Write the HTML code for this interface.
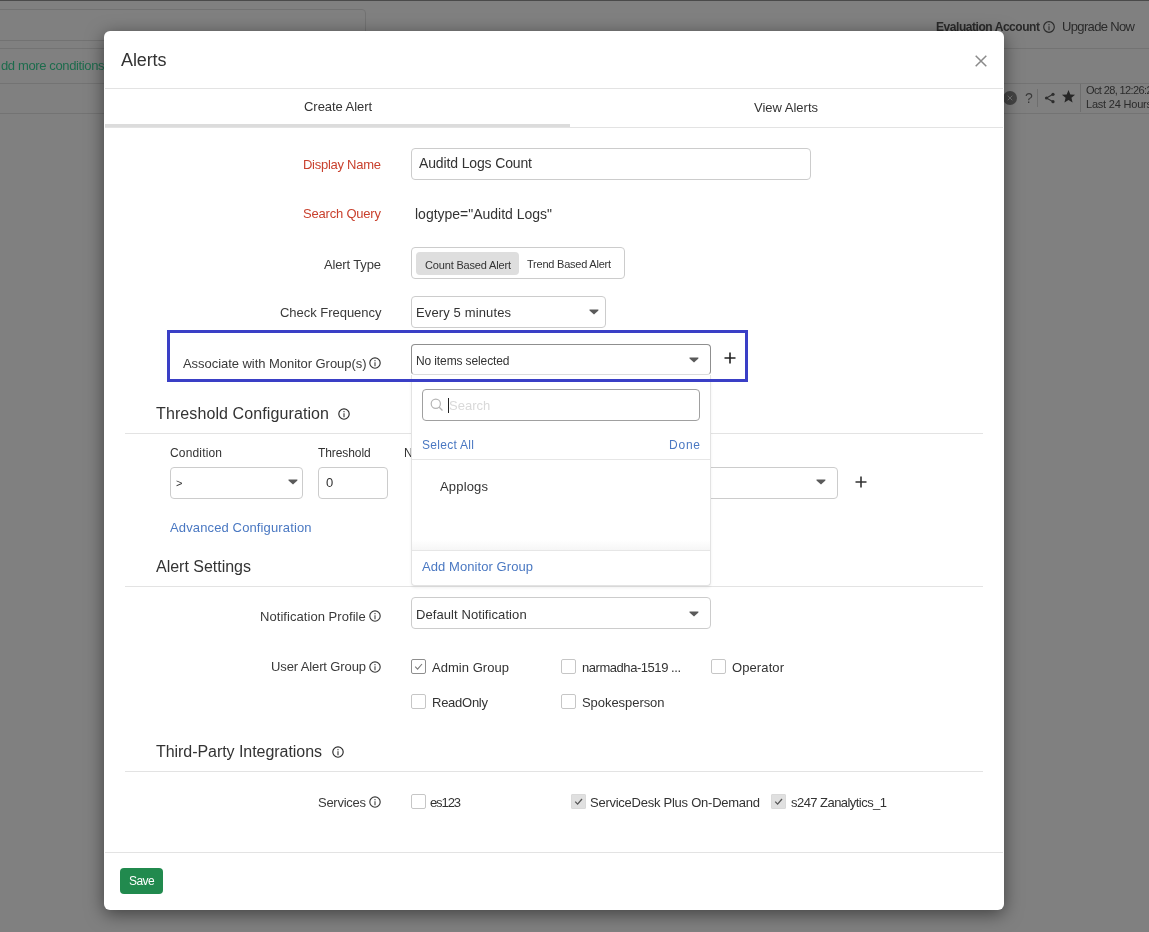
<!DOCTYPE html>
<html><head><meta charset="utf-8">
<style>
*{box-sizing:border-box;margin:0;padding:0}
html,body{width:1149px;height:932px;overflow:hidden}
body{position:relative;background:#808080;font-family:"Liberation Sans",sans-serif;color:#333}
.a{position:absolute;white-space:nowrap;will-change:transform}
</style></head><body>
<div class="a" style="left:0px;top:0px;width:1149px;height:1px;background:#4a4a4a"></div>
<div class="a" style="left:-6px;top:9px;width:372px;height:32px;border:1px solid #727272;border-radius:4px"></div>
<div class="a" style="left:0px;top:48px;width:1149px;height:1px;background:#737373"></div>
<div class="a" style="left:0px;top:83px;width:1149px;height:1px;background:#737373"></div>
<div class="a" style="left:0px;top:113px;width:1149px;height:1px;background:#737373"></div>
<div class="a" style="top:58.70px;font-size:13px;line-height:13px;color:#1d6b4c;letter-spacing:-0.373px;left:0.50px;">dd more conditions</div>
<div class="a" style="top:21.14px;font-size:12px;line-height:12px;color:#2a2a2a;letter-spacing:-0.445px;font-weight:bold;left:935.70px;">Evaluation Account</div>
<svg class="a" style="left:1042.5px;top:20.6px" width="12" height="12" viewBox="0 0 12 12"><circle cx="6" cy="6" r="5.3" fill="none" stroke="#2a2a2a" stroke-width="1.15"/><path d="M6 5.3 V9.2" stroke="#2a2a2a" stroke-width="1.05"/><circle cx="6" cy="3.7" r="0.65" fill="#2a2a2a"/></svg>
<div class="a" style="top:19.50px;font-size:13px;line-height:13px;color:#2a2a2a;letter-spacing:-0.648px;left:1062.40px;">Upgrade Now</div>
<svg class="a" style="left:1002.5px;top:91.4px" width="14" height="14" viewBox="0 0 14 14"><circle cx="7" cy="7" r="7" fill="#444"/><path d="M4.7 4.7 L9.3 9.3 M9.3 4.7 L4.7 9.3" stroke="#777" stroke-width="1"/></svg>
<div class="a" style="top:90.65px;font-size:14px;line-height:14px;color:#3a3a3a;left:1024.50px;">?</div>
<div class="a" style="left:1037px;top:89px;width:1px;height:18px;background:#6e6e6e"></div>
<svg class="a" style="left:1044px;top:92px" width="12" height="12" viewBox="0 0 12 12"><circle cx="2.5" cy="6" r="1.6" fill="#2e2e2e"/><circle cx="9" cy="2.3" r="1.6" fill="#2e2e2e"/><circle cx="9" cy="9.7" r="1.6" fill="#2e2e2e"/><path d="M2.5 6 L9 2.3 M2.5 6 L9 9.7" stroke="#2e2e2e" stroke-width="1.1"/></svg>
<svg class="a" style="left:1061px;top:89px" width="15" height="15" viewBox="0 0 24 24"><path d="M12 1.5 L14.9 8.6 L22.5 9.2 L16.7 14.1 L18.5 21.6 L12 17.5 L5.5 21.6 L7.3 14.1 L1.5 9.2 L9.1 8.6 Z" fill="#262626"/></svg>
<div class="a" style="left:1080px;top:84px;width:1px;height:28px;background:#6e6e6e"></div>
<div class="a" style="top:84.69px;font-size:11px;line-height:11px;color:#2a2a2a;letter-spacing:-0.622px;left:1086.00px;">Oct 28, 12:26:28</div>
<div class="a" style="top:99.49px;font-size:11px;line-height:11px;color:#2a2a2a;letter-spacing:-0.207px;left:1086.00px;">Last 24 Hours</div>
<div class="a" style="left:104px;top:31px;width:900px;height:879px;background:#fff;border-radius:6px;box-shadow:0 4px 18px rgba(0,0,0,.5)"></div>
<div class="a" style="top:50.76px;font-size:18px;line-height:18px;color:#333;letter-spacing:-0.102px;left:121.00px;">Alerts</div>
<svg class="a" style="left:975px;top:55px" width="12" height="12" viewBox="0 0 12 12"><path d="M0.7 0.7 L11.3 11.3 M11.3 0.7 L0.7 11.3" stroke="#8a8a8a" stroke-width="1.5"/></svg>
<div class="a" style="left:105px;top:88px;width:898px;height:1px;background:#e3e3e3"></div>
<div class="a" style="top:100.00px;font-size:13px;line-height:13px;color:#333;letter-spacing:-0.059px;left:37.50px;width:600px;text-align:center;">Create Alert</div>
<div class="a" style="top:101.00px;font-size:13px;line-height:13px;color:#333;left:486.00px;width:600px;text-align:center;">View Alerts</div>
<div class="a" style="left:105px;top:124px;width:465px;height:3px;background:#dcdcdc"></div>
<div class="a" style="left:105px;top:127px;width:898px;height:1px;background:#e3e3e3"></div>
<div class="a" style="top:158.20px;font-size:13px;line-height:13px;color:#c9412e;letter-spacing:-0.265px;right:768.26px;text-align:right;">Display Name</div>
<div class="a" style="left:411px;top:148px;width:400px;height:32px;border:1px solid #cccccc;border-radius:4px"></div>
<div class="a" style="top:155.75px;font-size:14px;line-height:14px;color:#333;letter-spacing:-0.137px;left:418.50px;">Auditd Logs Count</div>
<div class="a" style="top:207.00px;font-size:13px;line-height:13px;color:#c9412e;letter-spacing:-0.200px;right:768.20px;text-align:right;">Search Query</div>
<div class="a" style="top:207.15px;font-size:14px;line-height:14px;color:#333;letter-spacing:-0.010px;left:414.50px;">logtype="Auditd Logs"</div>
<div class="a" style="top:258.00px;font-size:13px;line-height:13px;color:#3a3a3a;letter-spacing:-0.143px;right:768.14px;text-align:right;">Alert Type</div>
<div class="a" style="left:411px;top:247px;width:214px;height:32px;border:1px solid #cccccc;border-radius:4px"></div>
<div class="a" style="left:416px;top:252px;width:103px;height:23px;background:#dedede;border-radius:4px"></div>
<div class="a" style="top:260.19px;font-size:11px;line-height:11px;color:#333;letter-spacing:-0.167px;left:424.50px;">Count Based Alert</div>
<div class="a" style="top:258.99px;font-size:11px;line-height:11px;color:#333;letter-spacing:-0.227px;left:527.00px;">Trend Based Alert</div>
<div class="a" style="top:305.70px;font-size:13px;line-height:13px;color:#3a3a3a;letter-spacing:-0.027px;right:768.03px;text-align:right;">Check Frequency</div>
<div class="a" style="left:411px;top:296px;width:195px;height:32px;border:1px solid #cccccc;border-radius:4px"></div>
<div class="a" style="top:305.80px;font-size:13px;line-height:13px;color:#333;letter-spacing:0.128px;left:416.40px;">Every 5 minutes</div>
<svg class="a" style="left:589px;top:308.5px" width="10" height="6" viewBox="0 0 10 6"><path d="M0.5 0.6 H9.4 V1.4 L5 5.4 L0.5 1.4 Z" fill="#5a5a5a"/></svg>
<div class="a" style="top:357.00px;font-size:13px;line-height:13px;color:#3a3a3a;letter-spacing:-0.048px;left:182.60px;">Associate with Monitor Group(s)</div>
<svg class="a" style="left:368.6px;top:357.2px" width="12" height="12" viewBox="0 0 12 12"><circle cx="6" cy="6" r="5.2" fill="none" stroke="#333" stroke-width="1.15"/><path d="M6 5.3 V9.2" stroke="#333" stroke-width="1.05"/><circle cx="6" cy="3.7" r="0.65" fill="#333"/></svg>
<div class="a" style="left:411px;top:344px;width:300px;height:31px;border:1px solid #8f8f8f;border-bottom-color:#dcdcdc;border-radius:4px"></div>
<div class="a" style="top:354.54px;font-size:12px;line-height:12px;color:#333;letter-spacing:-0.117px;left:416.40px;">No items selected</div>
<svg class="a" style="left:688.8px;top:357px" width="10" height="6" viewBox="0 0 10 6"><path d="M0.5 0.6 H9.4 V1.4 L5 5.4 L0.5 1.4 Z" fill="#5a5a5a"/></svg>
<svg class="a" style="left:723.9px;top:352.3px" width="12" height="12" viewBox="0 0 12 12"><path d="M6 0.5 V11.5 M0.5 6 H11.5" stroke="#222" stroke-width="1.6"/></svg>
<div class="a" style="top:405.76px;font-size:16px;line-height:16px;color:#333;letter-spacing:0.102px;left:155.80px;">Threshold Configuration</div>
<svg class="a" style="left:338.4px;top:408.2px" width="12" height="12" viewBox="0 0 12 12"><circle cx="6" cy="6" r="5.2" fill="none" stroke="#2a2a2a" stroke-width="1.15"/><path d="M6 5.3 V9.2" stroke="#2a2a2a" stroke-width="1.05"/><circle cx="6" cy="3.7" r="0.65" fill="#2a2a2a"/></svg>
<div class="a" style="left:125px;top:433px;width:858px;height:1px;background:#e3e3e3"></div>
<div class="a" style="top:446.84px;font-size:12px;line-height:12px;color:#333;letter-spacing:0.163px;left:170.40px;">Condition</div>
<div class="a" style="top:446.84px;font-size:12px;line-height:12px;color:#333;letter-spacing:-0.082px;left:318.40px;">Threshold</div>
<div class="a" style="top:446.84px;font-size:12px;line-height:12px;color:#333;left:404.00px;">N</div>
<div class="a" style="left:170px;top:467px;width:133px;height:32px;border:1px solid #cccccc;border-radius:4px"></div>
<div class="a" style="top:477.69px;font-size:11px;line-height:11px;color:#333;left:175.60px;">&gt;</div>
<svg class="a" style="left:287.8px;top:479px" width="10" height="6" viewBox="0 0 10 6"><path d="M0.5 0.6 H9.4 V1.4 L5 5.4 L0.5 1.4 Z" fill="#5a5a5a"/></svg>
<div class="a" style="left:318px;top:467px;width:70px;height:32px;border:1px solid #cccccc;border-radius:4px"></div>
<div class="a" style="top:475.50px;font-size:13px;line-height:13px;color:#333;left:325.50px;">0</div>
<div class="a" style="left:600px;top:467px;width:238px;height:32px;border:1px solid #cccccc;border-radius:4px"></div>
<svg class="a" style="left:816px;top:479px" width="10" height="6" viewBox="0 0 10 6"><path d="M0.5 0.6 H9.4 V1.4 L5 5.4 L0.5 1.4 Z" fill="#5a5a5a"/></svg>
<svg class="a" style="left:855.4px;top:476.3px" width="12" height="12" viewBox="0 0 12 12"><path d="M6 0.5 V11.5 M0.5 6 H11.5" stroke="#333" stroke-width="1.6"/></svg>
<div class="a" style="top:521.00px;font-size:13px;line-height:13px;color:#4a78c2;letter-spacing:0.131px;left:170.40px;">Advanced Configuration</div>
<div class="a" style="top:558.66px;font-size:16px;line-height:16px;color:#333;letter-spacing:-0.012px;left:155.70px;">Alert Settings</div>
<div class="a" style="left:125px;top:586px;width:858px;height:1px;background:#e3e3e3"></div>
<div class="a" style="top:609.50px;font-size:13px;line-height:13px;color:#3a3a3a;letter-spacing:0.054px;right:782.95px;text-align:right;">Notification Profile</div>
<svg class="a" style="left:368.8px;top:609.5px" width="12" height="12" viewBox="0 0 12 12"><circle cx="6" cy="6" r="5.2" fill="none" stroke="#383838" stroke-width="1.15"/><path d="M6 5.3 V9.2" stroke="#383838" stroke-width="1.05"/><circle cx="6" cy="3.7" r="0.65" fill="#383838"/></svg>
<div class="a" style="left:411px;top:597px;width:300px;height:32px;border:1px solid #cccccc;border-radius:4px"></div>
<div class="a" style="top:608.00px;font-size:13px;line-height:13px;color:#333;letter-spacing:0.079px;left:416.40px;">Default Notification</div>
<svg class="a" style="left:689px;top:611px" width="10" height="6" viewBox="0 0 10 6"><path d="M0.5 0.6 H9.4 V1.4 L5 5.4 L0.5 1.4 Z" fill="#5a5a5a"/></svg>
<div class="a" style="top:660.40px;font-size:13px;line-height:13px;color:#3a3a3a;letter-spacing:-0.121px;right:783.12px;text-align:right;">User Alert Group</div>
<svg class="a" style="left:368.8px;top:660.5px" width="12" height="12" viewBox="0 0 12 12"><circle cx="6" cy="6" r="5.2" fill="none" stroke="#383838" stroke-width="1.15"/><path d="M6 5.3 V9.2" stroke="#383838" stroke-width="1.05"/><circle cx="6" cy="3.7" r="0.65" fill="#383838"/></svg>
<div class="a" style="left:411px;top:659px;width:15px;height:15px;border:1px solid #8e8e8e;border-radius:2px;background:#fff"><svg style="position:absolute;left:0px;top:0px" width="13" height="13" viewBox="0 0 13 13"><path d="M3.2 6.6 L5.6 9.1 L10 4" fill="none" stroke="#7a7a7a" stroke-width="1.1"/></svg></div>
<div class="a" style="top:660.80px;font-size:13px;line-height:13px;color:#333;letter-spacing:0.041px;left:432.20px;">Admin Group</div>
<div class="a" style="left:561px;top:659px;width:15px;height:15px;border:1px solid #c6c6c6;border-radius:2px;background:#fff"></div>
<div class="a" style="top:660.80px;font-size:13px;line-height:13px;color:#333;letter-spacing:-0.452px;left:582.20px;">narmadha-1519 ...</div>
<div class="a" style="left:711px;top:659px;width:15px;height:15px;border:1px solid #c6c6c6;border-radius:2px;background:#fff"></div>
<div class="a" style="top:660.80px;font-size:13px;line-height:13px;color:#333;letter-spacing:0.100px;left:732.20px;">Operator</div>
<div class="a" style="left:411px;top:694px;width:15px;height:15px;border:1px solid #c6c6c6;border-radius:2px;background:#fff"></div>
<div class="a" style="top:695.80px;font-size:13px;line-height:13px;color:#333;letter-spacing:-0.258px;left:432.20px;">ReadOnly</div>
<div class="a" style="left:561px;top:694px;width:15px;height:15px;border:1px solid #c6c6c6;border-radius:2px;background:#fff"></div>
<div class="a" style="top:695.80px;font-size:13px;line-height:13px;color:#333;letter-spacing:-0.055px;left:582.20px;">Spokesperson</div>
<div class="a" style="top:744.36px;font-size:16px;line-height:16px;color:#333;letter-spacing:-0.051px;left:155.70px;">Third-Party Integrations</div>
<svg class="a" style="left:331.6px;top:746.3px" width="12" height="12" viewBox="0 0 12 12"><circle cx="6" cy="6" r="5.2" fill="none" stroke="#2a2a2a" stroke-width="1.15"/><path d="M6 5.3 V9.2" stroke="#2a2a2a" stroke-width="1.05"/><circle cx="6" cy="3.7" r="0.65" fill="#2a2a2a"/></svg>
<div class="a" style="left:125px;top:771px;width:858px;height:1px;background:#e3e3e3"></div>
<div class="a" style="top:795.60px;font-size:13px;line-height:13px;color:#3a3a3a;letter-spacing:-0.264px;right:783.26px;text-align:right;">Services</div>
<svg class="a" style="left:369px;top:795.5px" width="12" height="12" viewBox="0 0 12 12"><circle cx="6" cy="6" r="5.2" fill="none" stroke="#383838" stroke-width="1.15"/><path d="M6 5.3 V9.2" stroke="#383838" stroke-width="1.05"/><circle cx="6" cy="3.7" r="0.65" fill="#383838"/></svg>
<div class="a" style="left:411px;top:794px;width:15px;height:15px;border:1px solid #c6c6c6;border-radius:2px;background:#fff"></div>
<div class="a" style="top:795.60px;font-size:13px;line-height:13px;color:#333;letter-spacing:-1.105px;left:430.00px;">es123</div>
<div class="a" style="left:571px;top:794px;width:15px;height:15px;border:1px solid #dadada;border-radius:1px;background:#e0e0e0"><svg style="position:absolute;left:0px;top:0px" width="13" height="13" viewBox="0 0 13 13"><path d="M3.2 6.6 L5.6 9.1 L10 4" fill="none" stroke="#555" stroke-width="1.3"/></svg></div>
<div class="a" style="top:795.60px;font-size:13px;line-height:13px;color:#333;letter-spacing:-0.251px;left:589.70px;">ServiceDesk Plus On-Demand</div>
<div class="a" style="left:771px;top:794px;width:15px;height:15px;border:1px solid #dadada;border-radius:1px;background:#e0e0e0"><svg style="position:absolute;left:0px;top:0px" width="13" height="13" viewBox="0 0 13 13"><path d="M3.2 6.6 L5.6 9.1 L10 4" fill="none" stroke="#555" stroke-width="1.3"/></svg></div>
<div class="a" style="top:795.60px;font-size:13px;line-height:13px;color:#333;letter-spacing:-0.549px;left:790.60px;">s247 Zanalytics_1</div>
<div class="a" style="left:105px;top:852px;width:898px;height:1px;background:#e3e3e3"></div>
<div class="a" style="left:120px;top:868px;width:43px;height:26px;background:#218a4e;border-radius:4px"></div>
<div class="a" style="top:874.84px;font-size:12px;line-height:12px;color:#fff;letter-spacing:-0.551px;left:128.70px;">Save</div>
<div class="a" style="left:411px;top:375px;width:300px;height:211px;background:#fff;border:1px solid #e3e3e3;border-top:none;border-radius:0 0 4px 4px;box-shadow:0 2px 3px rgba(0,0,0,.06)"></div>
<div class="a" style="left:422px;top:389px;width:278px;height:32px;border:1px solid #a0a0a0;border-radius:4px"></div>
<svg class="a" style="left:429px;top:397px" width="16" height="16" viewBox="0 0 16 16"><circle cx="6.8" cy="6.8" r="4.6" fill="none" stroke="#b5b5b5" stroke-width="1.2"/><path d="M10.2 10.2 L13.5 13.5" stroke="#b5b5b5" stroke-width="1.3"/></svg>
<div class="a" style="left:448px;top:398px;width:1px;height:15px;background:#222"></div>
<div class="a" style="top:399.00px;font-size:13px;line-height:13px;color:#d9d9d9;left:449.00px;">Search</div>
<div class="a" style="top:438.74px;font-size:12px;line-height:12px;color:#4a78c2;letter-spacing:0.293px;left:422.30px;">Select All</div>
<div class="a" style="top:438.74px;font-size:12px;line-height:12px;color:#4a78c2;letter-spacing:0.771px;right:448.23px;text-align:right;">Done</div>
<div class="a" style="left:412px;top:459px;width:298px;height:1px;background:#e6e6e6"></div>
<div class="a" style="top:480.30px;font-size:13px;line-height:13px;color:#333;letter-spacing:0.171px;left:440.40px;">Applogs</div>
<div class="a" style="left:412px;top:540px;width:298px;height:10px;background:linear-gradient(#fff,#f6f6f6)"></div>
<div class="a" style="left:412px;top:550px;width:298px;height:1px;background:#e6e6e6"></div>
<div class="a" style="top:559.70px;font-size:13px;line-height:13px;color:#4a78c2;letter-spacing:0.073px;left:422.30px;">Add Monitor Group</div>
<div class="a" style="left:167px;top:330px;width:581px;height:52px;border:3px solid #3a3fc6"></div>
</body></html>
